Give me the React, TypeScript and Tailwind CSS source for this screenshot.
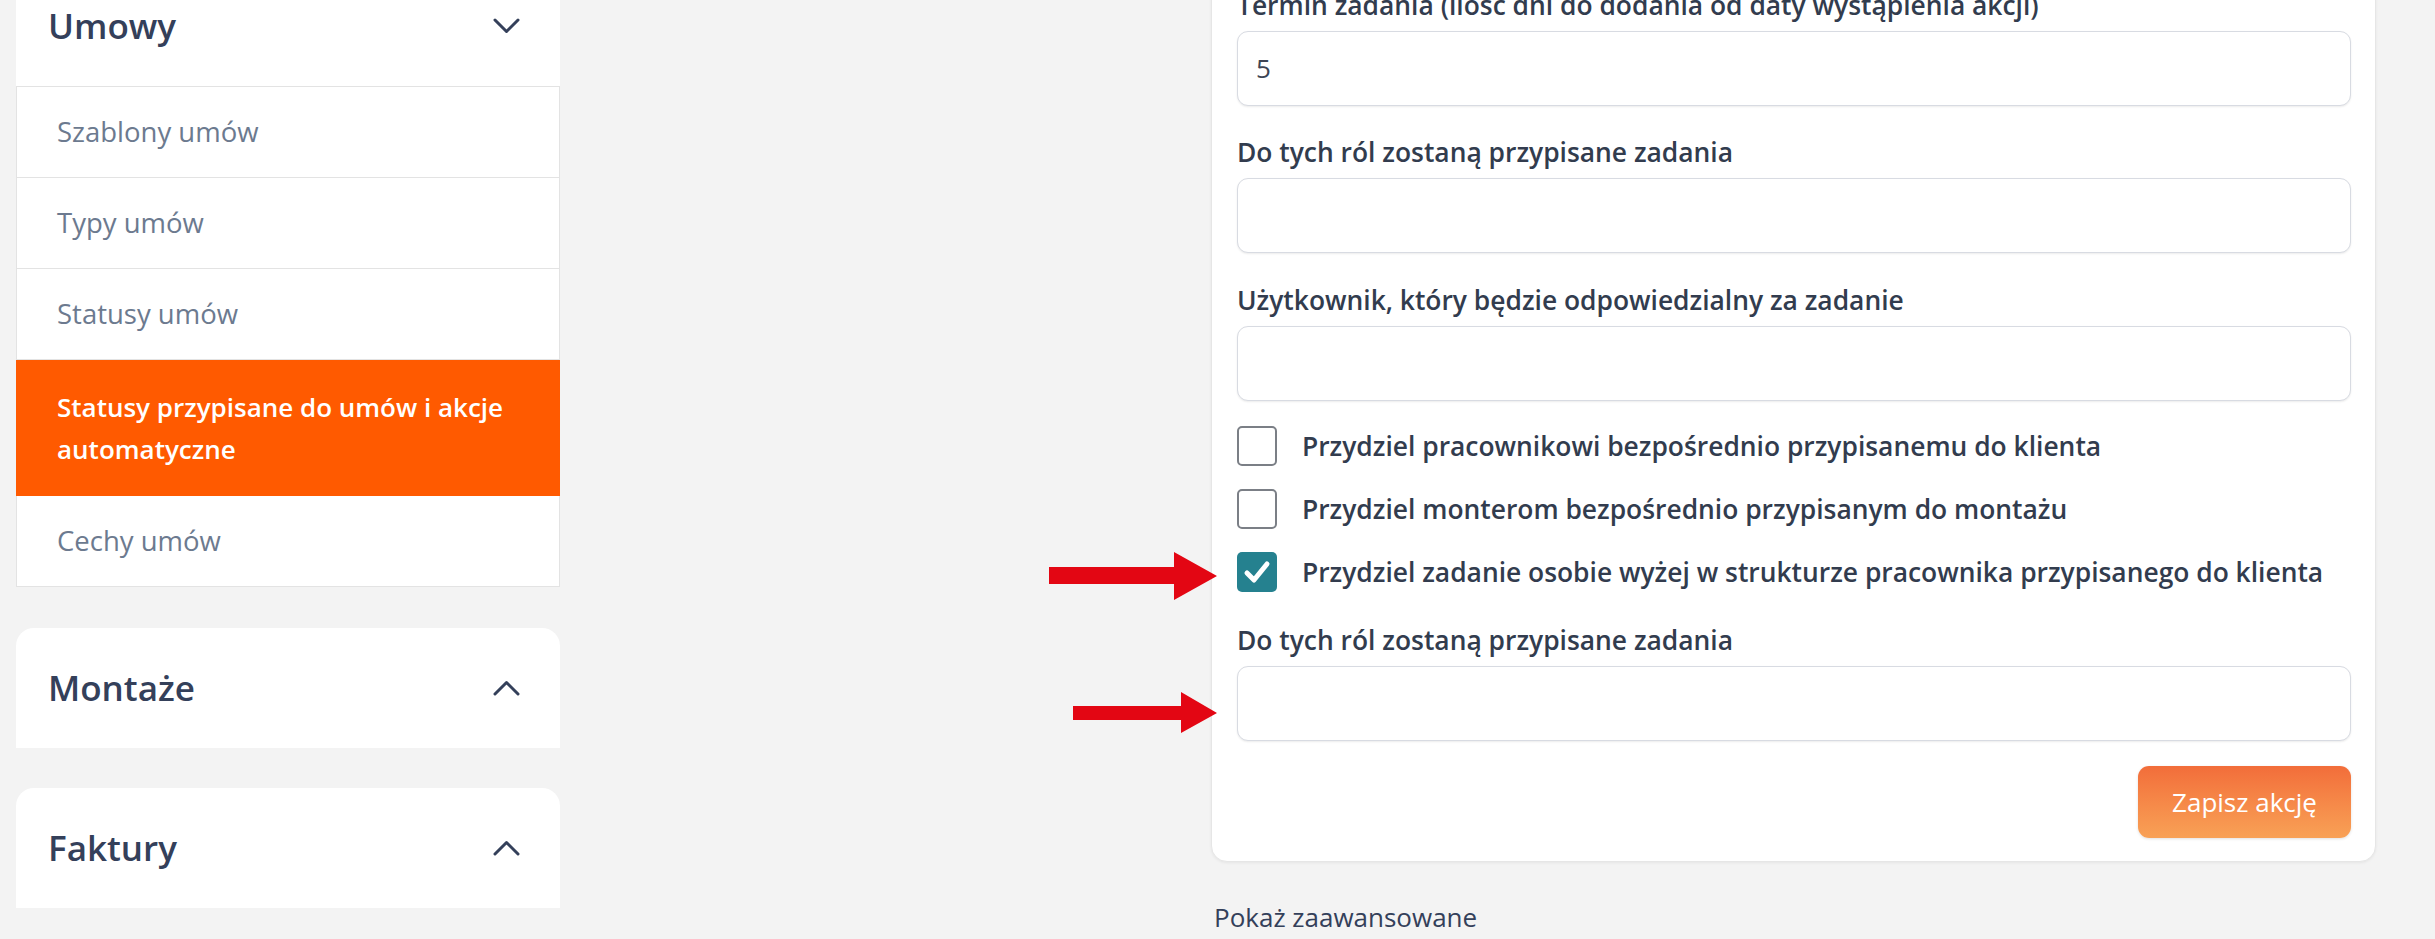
import React from "react";

const font = { fontFamily: '"Open Sans", "Noto Sans", Arial, sans-serif' };

function ChevronDown() {
  return (
    <svg width="27" height="16" viewBox="0 0 27 16" fill="none">
      <path d="M2 2 L13.5 13.5 L25 2" stroke="#34405a" strokeWidth="3" strokeLinecap="round" strokeLinejoin="round" />
    </svg>
  );
}

function ChevronUp() {
  return (
    <svg width="27" height="16" viewBox="0 0 27 16" fill="none">
      <path d="M2 14 L13.5 2.5 L25 14" stroke="#34405a" strokeWidth="3" strokeLinecap="round" strokeLinejoin="round" />
    </svg>
  );
}

function Field({ label, value }: { label: string; value?: string }) {
  return (
    <div className="flex flex-col">
      <div className="text-[26.4px] leading-[36px] font-semibold text-[#323c4e] mb-[8px] whitespace-nowrap">{label}</div>
      <div className="h-[75px] rounded-[11px] border border-[#d8dbe2] bg-white shadow-[0_1px_2px_rgba(0,0,0,0.08)] flex items-center px-[18px] text-[26px] text-[#3d4555]">
        {value}
      </div>
    </div>
  );
}

function Check({ checked, label }: { checked?: boolean; label: string }) {
  return (
    <div className="flex items-center h-[40px] gap-[25px]">
      {checked ? (
        <div className="w-[40px] h-[40px] rounded-[5px] bg-[#25818f] flex items-center justify-center">
          <svg width="28" height="26" viewBox="0 0 28 26" fill="none">
            <path d="M4 14 L11 21 L24 5" stroke="white" strokeWidth="5" strokeLinecap="round" strokeLinejoin="round" />
          </svg>
        </div>
      ) : (
        <div className="w-[40px] h-[40px] rounded-[5px] border-2 border-[#7b7f86] bg-white" />
      )}
      <span className="text-[26.4px] leading-[36px] font-semibold text-[#323c4e] whitespace-nowrap">{label}</span>
    </div>
  );
}

function SideItem({ label, active }: { label: string; active?: boolean }) {
  return active ? (
    <div className="bg-[#ff5a00] -mx-px px-[41px] py-[26px] text-[26px] leading-[42px] font-semibold text-white">{label}</div>
  ) : (
    <div className="border-b border-[#e3e3e3] px-[40px] py-[24px] text-[27.5px] leading-[42px] text-[#6c7a8f]">{label}</div>
  );
}

function CollapsedCard({ title }: { title: string }) {
  return (
    <div className="h-[120px] bg-white rounded-t-[18px] flex items-center justify-between pl-[32px] pr-[40px]">
      <span className="text-[35px] font-semibold text-[#34405a]">{title}</span>
      <ChevronUp />
    </div>
  );
}

export default function App() {
  return (
    <div className="relative flex items-start h-[939px] overflow-hidden bg-[#f3f3f3]" style={font}>
      {/* Sidebar */}
      <div className="ml-[16px] w-[544px] -mt-[34px] flex flex-col">
        <div className="h-[120px] bg-white rounded-t-[18px] flex items-center justify-between pl-[32px] pr-[40px]">
          <span className="text-[35px] font-semibold text-[#34405a]">Umowy</span>
          <ChevronDown />
        </div>
        <div className="border border-[#e3e3e3] bg-white flex flex-col">
          <SideItem label="Szablony umów" />
          <SideItem label="Typy umów" />
          <SideItem label="Statusy umów" />
          <SideItem label="Statusy przypisane do umów i akcje automatyczne" active />
          <div className="px-[40px] py-[24px] text-[27.5px] leading-[42px] text-[#6c7a8f]">Cechy umów</div>
        </div>
        <div className="mt-[41px] flex flex-col gap-[40px]">
          <CollapsedCard title="Montaże" />
          <CollapsedCard title="Faktury" />
        </div>
      </div>

      {/* Main */}
      <div className="ml-[651px] w-[1165px] -mt-[39px] flex flex-col">
        <div className="bg-white border border-[#e6e6e6] rounded-b-[16px] shadow-[0_1px_3px_rgba(0,0,0,0.06)] pt-[25px] pb-[23px] pl-[25px] pr-[24px] flex flex-col">
          <Field label="Termin zadania (ilość dni do dodania od daty wystąpienia akcji)" value="5" />
          <div className="mt-[28px]">
            <Field label="Do tych ról zostaną przypisane zadania" />
          </div>
          <div className="mt-[29px]">
            <Field label="Użytkownik, który będzie odpowiedzialny za zadanie" />
          </div>
          <div className="mt-[25px] flex flex-col gap-[23px]">
            <Check label="Przydziel pracownikowi bezpośrednio przypisanemu do klienta" />
            <Check label="Przydziel monterom bezpośrednio przypisanym do montażu" />
            <Check checked label="Przydziel zadanie osobie wyżej w strukturze pracownika przypisanego do klienta" />
          </div>
          <div className="mt-[30px]">
            <Field label="Do tych ról zostaną przypisane zadania" />
          </div>
          <div className="mt-[25px] flex justify-end">
            <button className="w-[213px] h-[72px] rounded-[11px] bg-gradient-to-b from-[#f26d3a] to-[#f8a156] text-white text-[26px] shadow-[0_1px_3px_rgba(0,0,0,0.12)]">
              Zapisz akcję
            </button>
          </div>
        </div>
        <div className="mt-[37px] pl-[3px] text-[26px] leading-[36px] text-[#34405a]">Pokaż zaawansowane</div>
      </div>

      {/* Annotation arrows */}
      <svg className="absolute left-[1045px] top-[548px]" width="176" height="56" viewBox="0 0 176 56">
        <polygon points="4,19 129,19 129,4 172,28 129,52 129,36 4,36" fill="#e30613" />
      </svg>
      <svg className="absolute left-[1069px] top-[688px]" width="152" height="50" viewBox="0 0 152 50">
        <polygon points="4,18 112,18 112,4 148,25 112,45 112,32 4,32" fill="#e30613" />
      </svg>
    </div>
  );
}
